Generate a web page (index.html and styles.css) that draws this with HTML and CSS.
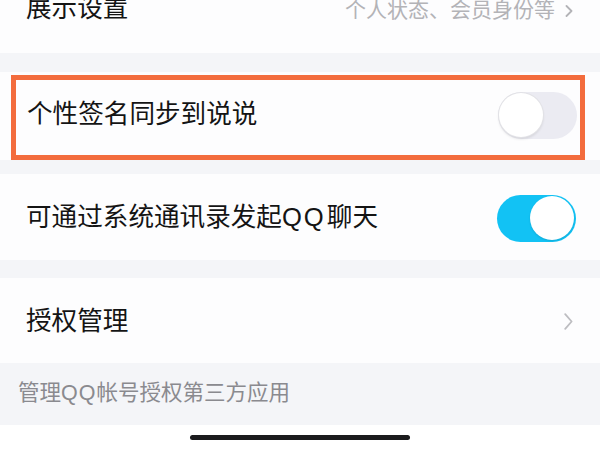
FILE: index.html
```html
<!DOCTYPE html>
<html lang="zh-CN">
<head>
<meta charset="utf-8">
<title>设置</title>
<link rel="stylesheet" href="styles.css">
</head>
<body>
<div class="screen">
  <div class="list">
    <div class="row row-first">
      <span class="label">展示设置</span>
      <span class="detail">个人状态、会员身份等<svg class="chev chev-small" viewBox="0 0 8 12" width="8" height="12"><path d="M1.5 1 L6.5 6 L1.5 11" fill="none" stroke="#b3b3b7" stroke-width="1.8" stroke-linecap="round" stroke-linejoin="round"/></svg></span>
    </div>
    <div class="gap gap-a"></div>
    <div class="row row-hl">
      <div class="hl">
        <span class="label">个性签名同步到说说</span>
        <span class="switch"><span class="knob"></span></span>
      </div>
    </div>
    <div class="gap gap-b"></div>
    <div class="row row-3">
      <span class="label">可通过系统通讯录发起<span class="qq">QQ</span>聊天</span>
      <span class="switch on"><span class="knob"></span></span>
    </div>
    <div class="gap gap-c"></div>
    <div class="row row-4">
      <span class="label">授权管理</span>
      <svg class="chev" viewBox="0 0 9 17" width="9" height="17"><path d="M1.2 1.2 L7.6 8.5 L1.2 15.8" fill="none" stroke="#bdbdc1" stroke-width="1.8" stroke-linecap="round" stroke-linejoin="round"/></svg>
    </div>
    <div class="footer">管理<span class="qq-s">QQ</span>帐号授权第三方应用</div>
    <div class="home"><span class="bar"></span></div>
  </div>
</div>
</body>
</html>
```

FILE: styles.css
```css
html, body {
  margin: 0;
  padding: 0;
  background: #ffffff;
}

.screen {
  width: 600px;
  height: 450px;
  overflow: hidden;
  font-family: "Liberation Sans", "Noto Sans CJK SC", sans-serif;
  color: #141414;
}

.list {
  margin-top: -35px;
  display: flex;
  flex-direction: column;
}

.row {
  display: flex;
  align-items: center;
  justify-content: space-between;
  background: #fdfdfe;
  box-sizing: border-box;
}

.label {
  font-size: 25.6px;
  line-height: 1;
  letter-spacing: 0;
}

.qq {
  letter-spacing: 2px;
  margin-right: 1px;
}

.qq-s {
  letter-spacing: 1px;
}

.row-first {
  height: 88px;
  padding: 0 27px 0 26px;
}

.detail {
  display: flex;
  align-items: center;
  font-size: 21px;
  color: #b3b3b7;
  line-height: 1;
}

.chev-small {
  margin-left: 10px;
  margin-top: 4px;
}

.gap {
  background: #f4f5f8;
}
.gap-a { height: 19px; }
.gap-b { height: 14px; }
.gap-c { height: 18px; }

.row-hl {
  height: 88px;
  padding: 3px 15px 0 11px;
  align-items: stretch;
}

.hl {
  flex: 1;
  box-sizing: border-box;
  height: 85px;
  border: 5px solid #f36c3d;
  padding: 0 3px 5px 11px;
  display: flex;
  align-items: center;
  justify-content: space-between;
  background: #fdfdfe;
}

.row-3 {
  height: 86px;
  padding: 2px 24px 0 26px;
}

.row-4 {
  height: 85px;
  padding: 2px 27px 0 26px;
}

.switch {
  width: 79px;
  height: 47px;
  border-radius: 24px;
  background: #ebebf2;
  display: flex;
  align-items: center;
  padding: 0 1px;
  box-sizing: border-box;
}

.switch .knob {
  width: 44px;
  height: 44px;
  border-radius: 50%;
  background: #ffffff;
  box-shadow: 0 0 0 1px #e2e2e6, 0 2px 3px rgba(0, 0, 0, 0.12);
}

.switch.on {
  background: #12c2f4;
  justify-content: flex-end;
  padding: 0 2px;
}

.switch.on .knob {
  box-shadow: 0 1px 2px rgba(0, 0, 0, 0.12);
}

.footer {
  height: 62px;
  box-sizing: border-box;
  padding: 0 0 0 18px;
  display: flex;
  align-items: center;
  background: #f4f5f8;
  font-size: 21.5px;
  color: #8a8a8f;
  line-height: 1;
}

.home {
  height: 25px;
  background: #ffffff;
  display: flex;
  justify-content: center;
  padding-top: 10px;
  box-sizing: border-box;
}

.bar {
  width: 220px;
  height: 5px;
  border-radius: 3px;
  background: #1b1b1d;
}
```
